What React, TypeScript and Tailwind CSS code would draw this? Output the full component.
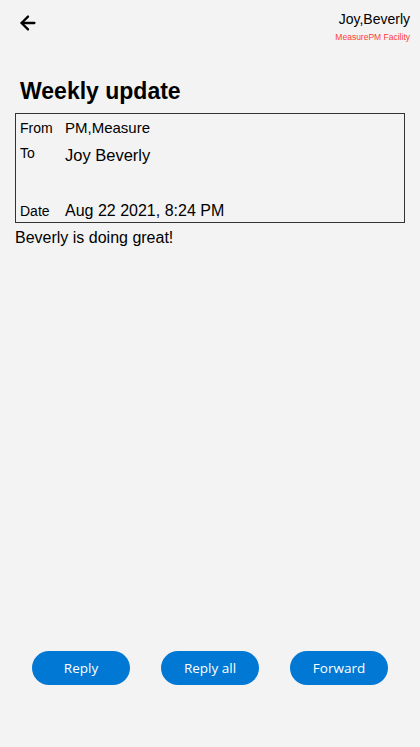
import { ArrowLeft } from 'lucide-react';

const sans = { fontFamily: '"Liberation Sans", Arial, sans-serif' };

export default function App() {
  return (
    <div className="flex flex-col h-[747px] w-[420px] bg-[#f3f3f3] text-black" style={sans}>
      {/* Header */}
      <header className="flex justify-between pl-[17px] pr-[10px] pt-[10px]">
        <button className="mt-[2px] h-[20px]">
          <ArrowLeft size={22} strokeWidth={2.5} />
        </button>
        <div className="flex flex-col items-end">
          <div className="text-[14px] leading-[18px]">Joy,Beverly</div>
          <div className="text-[8.5px] leading-[12px] mt-[3px] text-[#ff3b3b]">MeasurePM Facility</div>
        </div>
      </header>

      <h1 className="text-[23px] leading-[28px] font-bold px-[20px] mt-[34px]">Weekly update</h1>

      {/* Details */}
      <div className="mx-[15px] mt-[8px] border border-[#333] h-[110px] flex flex-col pl-[4px] pt-[4px] pb-[1px]">
        <Row label="From" value="PM,Measure" valueSize="text-[15px] leading-[20px]" />
        <Row label="To" value="Joy Beverly" valueSize="text-[16.5px] leading-[24px]" className="mt-[5px]" />
        <div className="flex-1" />
        <Row label="Date" value="Aug 22 2021, 8:24 PM" valueSize="text-[16px] leading-[20px]" />
      </div>

      <p className="px-[15px] mt-[4px] text-[16px] leading-[22px]">Beverly is doing great!</p>

      <div className="flex-1" />

      {/* Actions */}
      <div className="flex justify-between px-[32px] mb-[62px]" style={{ fontFamily: '"Open Sans", "Noto Sans", sans-serif' }}>
        {['Reply', 'Reply all', 'Forward'].map((label) => (
          <button
            key={label}
            className="w-[98px] h-[34px] rounded-full bg-[#0078d4] text-white text-[13.5px]"
          >
            {label}
          </button>
        ))}
      </div>
    </div>
  );
}

interface RowProps {
  label: string;
  value: string;
  valueSize: string;
  className?: string;
}

function Row({ label, value, valueSize, className = '' }: RowProps) {
  return (
    <div className={`flex items-start ${className}`}>
      <span className="w-[45px] text-[14px] leading-[20px]">{label}</span>
      <span className={valueSize}>{value}</span>
    </div>
  );
}
